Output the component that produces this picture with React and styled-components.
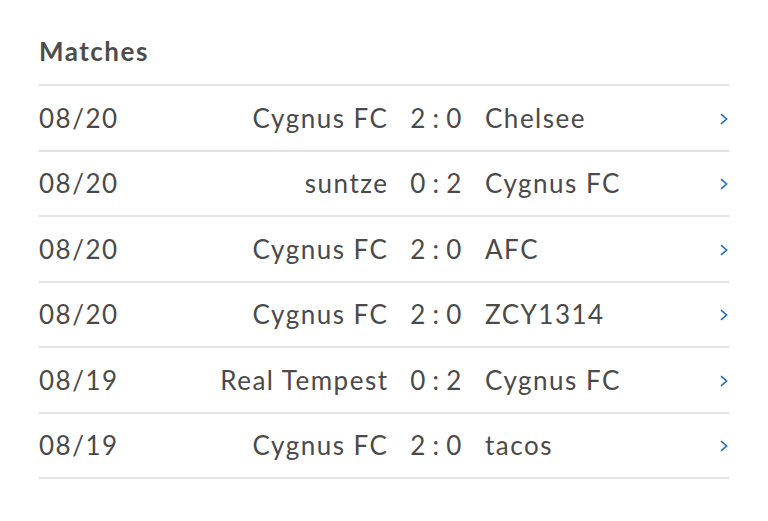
import React from "react";
import styled, { createGlobalStyle } from "styled-components";

const Global = createGlobalStyle`
  html, body { margin: 0; padding: 0; background: #fff; }
  body { font-family: "Lato", "Noto Sans", sans-serif; color: #444; }
`;

const Page = styled.div`
  padding: 30px 39px 0 39px;
  width: 690px;
`;

const Title = styled.h2`
  margin: 0;
  font-size: 26px;
  font-weight: 700;
  letter-spacing: 1.5px;
  color: #4d4d4d;
  line-height: 42px;
  padding-bottom: 12px;
  border-bottom: 2px solid #e4e4e4;
`;

const Row = styled.a`
  display: grid;
  grid-template-columns: 130px 218px 98px 1fr auto;
  align-items: center;
  height: 63.5px;
  border-bottom: 2px solid #e4e4e4;
  font-size: 26px;
  letter-spacing: 1.5px;
  color: #4a4a4a;
  text-decoration: none;
`;

const Date = styled.span``;
const Home = styled.span`text-align: right; margin-right: -1.5px;`;
const Score = styled.span`text-align: center; letter-spacing: 0.3px;`;
const Away = styled.span``;
const Chevron = styled.svg`
  display: block;
  width: 8px;
  height: 12px;
  margin-right: 1px;
  margin-top: 2px;
  color: #1f6fc0;
`;

const matches = [
  ["08/20", "Cygnus FC", "2 : 0", "Chelsee"],
  ["08/20", "suntze", "0 : 2", "Cygnus FC"],
  ["08/20", "Cygnus FC", "2 : 0", "AFC"],
  ["08/20", "Cygnus FC", "2 : 0", "ZCY1314"],
  ["08/19", "Real Tempest", "0 : 2", "Cygnus FC"],
  ["08/19", "Cygnus FC", "2 : 0", "tacos"],
];

export default function App() {
  return (
    <Page>
      <Global />
      <Title>Matches</Title>
      {matches.map(([d, h, s, a], i) => (
        <Row key={i}>
          <Date>{d}</Date>
          <Home>{h}</Home>
          <Score>{s}</Score>
          <Away>{a}</Away>
          <Chevron viewBox="0 0 8 12" fill="none">
            <path d="M1 1.2 L6.6 6 L1 10.8" stroke="currentColor" strokeWidth="1.6" />
          </Chevron>
        </Row>
      ))}
    </Page>
  );
}
